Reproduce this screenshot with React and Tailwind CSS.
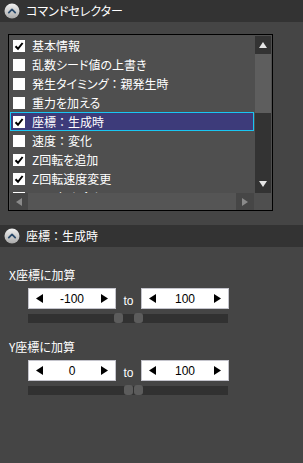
import React from 'react';

const items = [
  { label: '基本情報', checked: true },
  { label: '乱数シード値の上書き', checked: false },
  { label: '発生タイミング：親発生時', checked: false },
  { label: '重力を加える', checked: false },
  { label: '座標：生成時', checked: true, selected: true },
  { label: '速度：変化', checked: false },
  { label: 'Z回転を追加', checked: true },
  { label: 'Z回転速度変更', checked: true },
  { label: 'XY回転を合わせる', checked: false },
];

const jp = { fontFamily: '"Noto Sans CJK JP", "Noto Sans", sans-serif', fontFeatureSettings: '"palt"' };

// palt squeezes the full-width colon, so render it without the feature
function JpText({ text }) {
  const parts = text.split('：');
  return parts.map((p, i) => (
    <React.Fragment key={i}>
      {p}
      {i < parts.length - 1 && <span style={{ fontFeatureSettings: 'normal' }}>：</span>}
    </React.Fragment>
  ));
}

function CollapseIcon() {
  return (
    <svg width="16" height="16" viewBox="0 0 16 16">
      <defs>
        <linearGradient id="cg" x1="0" y1="0" x2="0" y2="1">
          <stop offset="0" stopColor="#f2f2f2" />
          <stop offset="1" stopColor="#a9a9a9" />
        </linearGradient>
      </defs>
      <circle cx="8" cy="8" r="7.5" fill="url(#cg)" />
      <path d="M4.8 9.6 L8 6.4 L11.2 9.6" fill="none" stroke="#2a4a6a" strokeWidth="1.8" strokeLinecap="round" strokeLinejoin="round" />
    </svg>
  );
}

function SectionHeader({ title }) {
  return (
    <div className="h-[22px] bg-[#333333] flex items-center pl-[4px] gap-[6px]">
      <CollapseIcon />
      <span className="text-[12px] text-white leading-none" style={jp}><JpText text={title} /></span>
    </div>
  );
}

function Checkbox({ checked }) {
  return (
    <div className="w-[12px] h-[12px] bg-white flex items-center justify-center shrink-0">
      {checked && (
        <svg width="10" height="10" viewBox="0 0 10 10">
          <path d="M1.5 5.2 L4 7.8 L8.6 2" fill="none" stroke="#000" strokeWidth="2" />
        </svg>
      )}
    </div>
  );
}

function Tri({ dir, color, size = 7 }) {
  const d = {
    up: `M0 ${size} L${size / 2 + 1} 0 L${size + 2} ${size} Z`,
    down: `M0 0 L${size + 2} 0 L${size / 2 + 1} ${size} Z`,
    left: `M${size} 0 L${size} ${size + 2} L0 ${size / 2 + 1} Z`,
    right: `M0 0 L0 ${size + 2} L${size} ${size / 2 + 1} Z`,
  }[dir];
  const w = dir === 'up' || dir === 'down' ? size + 2 : size;
  const h = dir === 'up' || dir === 'down' ? size : size + 2;
  return (
    <svg width={w} height={h} viewBox={`0 0 ${w} ${h}`}>
      <path d={d} fill={color} />
    </svg>
  );
}

function SpinBox({ value }) {
  return (
    <div className="w-[88px] h-[21px] bg-white border border-[#c4c4cc] flex items-center justify-between px-[7px]">
      <Tri dir="left" color="#000" size={7} />
      <span className="text-[12px] text-black leading-none" style={{ fontFamily: '"Liberation Sans", Arial, sans-serif' }}>{value}</span>
      <Tri dir="right" color="#000" size={7} />
    </div>
  );
}

function RangeRow({ label, from, to, handles }) {
  return (
    <div className="flex flex-col">
      <div className="pl-[9px] text-[12px] text-white leading-none" style={jp}>{label}</div>
      <div className="ml-[28px] mt-[7px] flex items-center">
        <SpinBox value={from} />
        <span className="w-[25px] text-center text-[12px] leading-none text-white pt-[5px]" style={{ fontFamily: '"Liberation Sans", Arial, sans-serif' }}>to</span>
        <SpinBox value={to} />
      </div>
      <div className="ml-[28px] mt-[5px] w-[200px] h-[9px] bg-[#313131] relative">
        {handles.map((x) => (
          <div key={x} className="absolute top-[-1px] w-[9px] h-[10px] rounded-[3px] bg-[#5c5c5c]" style={{ left: x }} />
        ))}
      </div>
    </div>
  );
}

export default function App() {
  return (
    <div className="w-[303px] h-[463px] bg-[#454545] overflow-hidden" style={jp}>
      <SectionHeader title="コマンドセレクター" />

      <div className="pt-[12px] pl-[8px]">
        <div className="w-[265px] h-[177px] border border-black flex flex-col bg-[#4f4f4f]">
          <div className="flex h-[158px] pt-[1px]">
            <div className="flex-1 flex flex-col pl-[1px] overflow-hidden">
              {items.map((it) => (
                <div
                  key={it.label}
                  className={`h-[19px] shrink-0 flex items-center gap-[7px] pl-[2px] mr-[1px] border ${
                    it.selected ? 'bg-[#3d3b7a] border-[#19c6f2]' : 'border-transparent'
                  }`}
                >
                  <Checkbox checked={it.checked} />
                  <span className="text-[12px] text-white leading-none whitespace-nowrap" style={jp}><JpText text={it.label} /></span>
                </div>
              ))}
            </div>
            <div className="w-[16px] mr-[1px] flex flex-col bg-[#333333]">
              <div className="h-[18px] flex items-center justify-center">
                <Tri dir="up" color="#e6e6e6" size={6} />
              </div>
              <div className="h-[59px] bg-[#5e5e5e]" />
              <div className="flex-1" />
              <div className="h-[18px] flex items-center justify-center">
                <Tri dir="down" color="#e6e6e6" size={6} />
              </div>
            </div>
          </div>
          <div className="flex h-[17px] bg-[#555555] pl-[1px]">
            <div className="w-[18px] bg-[#464646] flex items-center justify-center">
              <Tri dir="left" color="#8a8a8a" size={6} />
            </div>
            <div className="flex-1" />
            <div className="w-[18px] bg-[#464646] flex items-center justify-center">
              <Tri dir="right" color="#8a8a8a" size={6} />
            </div>
            <div className="w-[18px] bg-[#4f4f4f]" />
          </div>
        </div>
      </div>

      <div className="mt-[14px]">
        <SectionHeader title="座標：生成時" />
      </div>

      <div className="pt-[22px] flex flex-col gap-[18px]">
        <RangeRow label="X座標に加算" from="-100" to="100" handles={[86, 106]} />
        <RangeRow label="Y座標に加算" from="0" to="100" handles={[96, 106]} />
      </div>
    </div>
  );
}
